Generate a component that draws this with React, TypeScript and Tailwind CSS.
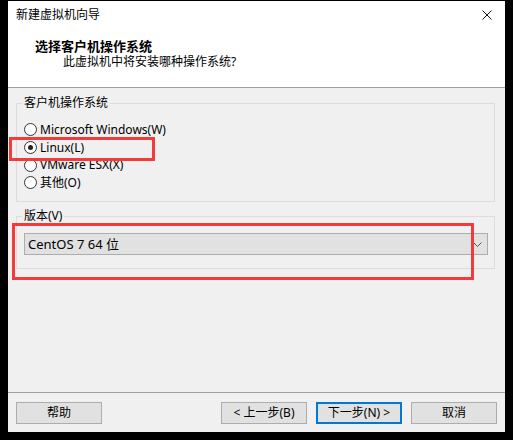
const font = { fontFamily: '"Noto Sans", "Noto Sans CJK SC", sans-serif' };

const systems = [
  { label: "Microsoft Windows(W)", checked: false },
  { label: "Linux(L)", checked: true },
  { label: "VMware ESX(X)", checked: false },
  { label: "其他(O)", checked: false },
];

function Radio({ checked }: { checked: boolean }) {
  return (
    <span className="w-[13px] h-[13px] rounded-full border border-[#333] bg-white flex items-center justify-center shrink-0">
      {checked && <span className="w-[5px] h-[5px] rounded-full bg-[#222]" />}
    </span>
  );
}

function Button({ label, primary }: { label: string; primary?: boolean }) {
  return (
    <button
      className={`w-[86px] h-[22px] bg-[#e1e1e1] text-[12px] text-black flex items-center justify-center ${
        primary ? "border-2 border-[#0078d7]" : "border border-[#adadad]"
      }`}
    >
      {label}
    </button>
  );
}

export default function App() {
  return (
    <div className="relative w-[513px] h-[440px] bg-black overflow-hidden text-[12px] text-black" style={font}>
      <div className="ml-[8px] mt-[1px] w-[497px] h-[431px] bg-[#f0f0f0] flex flex-col">
        {/* header */}
        <div className="h-[86px] bg-white border-b border-[#a0a0a0] box-content">
          <div className="h-[28px] flex items-center justify-between pl-[8px] pr-[13px]">
            <span className="leading-[16px]">新建虚拟机向导</span>
            <svg width="10" height="10" viewBox="0 0 10 10">
              <path d="M0.5 0.5L9.5 9.5M9.5 0.5L0.5 9.5" stroke="#111" strokeWidth="1" />
            </svg>
          </div>
          <div className="mt-[9px] pl-[27px] text-[13px] font-bold leading-[16px]">选择客户机操作系统</div>
          <div className="pl-[55px] leading-[16px]">此虚拟机中将安装哪种操作系统?</div>
        </div>

        {/* body */}
        <div className="flex-1 pl-[8px] pr-[10px] pt-[15px] flex flex-col gap-[14px]">
          <div className="relative h-[99px] border border-[#dcdcdc] pl-[7px] pt-[17px]">
            <span className="absolute -top-[9px] left-[5px] px-[2px] bg-[#f0f0f0] leading-[16px]">客户机操作系统</span>
            {systems.map((s) => (
              <div key={s.label} className="h-[17.7px] flex items-center gap-[3px] leading-[16px]">
                <Radio checked={s.checked} />
                <span>{s.label}</span>
              </div>
            ))}
          </div>

          <div className="relative h-[53px] border border-[#dcdcdc] pl-[7px] pr-[6px] pt-[16px]">
            <span className="absolute -top-[9px] left-[5px] px-[2px] bg-[#f0f0f0] leading-[16px]">版本(V)</span>
            <div className="h-[22px] bg-[#e1e1e1] border border-[#adadad] flex items-center justify-between pl-[3px] pr-[5px]">
              <span className="leading-[16px] text-[13px]">CentOS 7 64 位</span>
              <svg width="9" height="5" viewBox="0 0 9 5">
                <path d="M0.5 0.5L4.5 4.5L8.5 0.5" fill="none" stroke="#555" strokeWidth="1" />
              </svg>
            </div>
          </div>
        </div>

        {/* footer */}
        <div className="h-[40px] border-t border-[#a0a0a0] px-[8px] pt-[9px] flex items-start justify-between">
          <Button label="帮助" />
          <div className="flex gap-[9px]">
            <Button label="< 上一步(B)" />
            <Button label="下一步(N) >" primary />
            <Button label="取消" />
          </div>
        </div>
      </div>

      {/* red annotation boxes */}
      <div className="absolute left-[9px] top-[137px] w-[146px] h-[24px] border-[3px] border-[#f43b3b]" />
      <div className="absolute left-[12px] top-[223px] w-[462px] h-[57px] border-[3px] border-[#f43b3b]" />
    </div>
  );
}
